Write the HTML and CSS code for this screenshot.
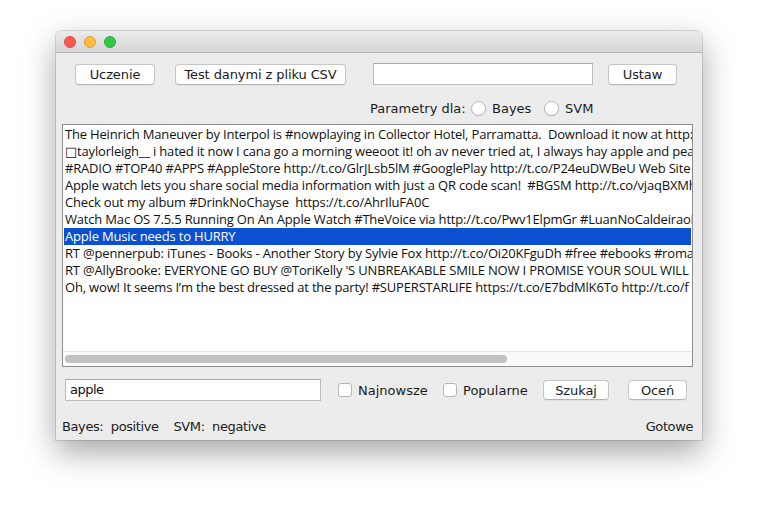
FILE: index.html
```html
<!DOCTYPE html>
<html lang="pl">
<head>
<meta charset="utf-8">
<title>Klasyfikator</title>
<link rel="stylesheet" href="styles.css">
</head>
<body>
<div class="stage">
  <div class="window">
    <div class="titlebar">
      <span class="light red"></span>
      <span class="light yellow"></span>
      <span class="light green"></span>
    </div>
    <div class="content">
      <div class="row-top">
        <button class="btn btn-learn">Uczenie</button>
        <button class="btn btn-test">Test danymi z pliku CSV</button>
        <div class="field field-param"></div>
        <button class="btn btn-set">Ustaw</button>
      </div>
      <div class="row-params">
        <span class="params-label">Parametry dla:</span>
        <span class="radio"></span>
        <span class="radio-label radio-label-bayes">Bayes</span>
        <span class="radio"></span>
        <span class="radio-label">SVM</span>
      </div>
      <div class="list">
        <div class="viewport">
          <div class="rows">
            <div class="item">The Heinrich Maneuver by Interpol is #nowplaying in Collector Hotel, Parramatta.  Download it now at http://</div>
            <div class="item">□taylorleigh__ i hated it now I cana go a morning weeoot it! oh av never tried at, I always hay apple and pear</div>
            <div class="item">#RADIO #TOP40 #APPS #AppleStore http://t.co/GlrJLsb5lM #GooglePlay http://t.co/P24euDWBeU Web Site h</div>
            <div class="item">Apple watch lets you share social media information with just a QR code scan!  #BGSM http://t.co/vjaqBXMh</div>
            <div class="item">Check out my album #DrinkNoChayse  https://t.co/AhrIluFA0C</div>
            <div class="item">Watch Mac OS 7.5.5 Running On An Apple Watch #TheVoice via http://t.co/Pwv1ElpmGr #LuanNoCaldeiraoD</div>
            <div class="item selected">Apple Music needs to HURRY</div>
            <div class="item">RT @pennerpub: iTunes - Books - Another Story by Sylvie Fox http://t.co/Oi20KFguDh #free #ebooks #roma</div>
            <div class="item">RT @AllyBrooke: EVERYONE GO BUY @ToriKelly 'S UNBREAKABLE SMILE NOW I PROMISE YOUR SOUL WILL BE S</div>
            <div class="item">Oh, wow! It seems I’m the best dressed at the party! #SUPERSTARLIFE https://t.co/E7bdMlK6To http://t.co/f</div>
          </div>
        </div>
        <div class="hscroll"><div class="thumb"></div></div>
      </div>
      <div class="row-search">
        <div class="field field-search">apple</div>
        <span class="check"></span>
        <span class="check-label check-label-new">Najnowsze</span>
        <span class="check"></span>
        <span class="check-label check-label-pop">Popularne</span>
        <button class="btn btn-search">Szukaj</button>
        <button class="btn btn-rate">Oceń</button>
      </div>
      <div class="row-status">
        <span class="status-left">Bayes:&nbsp; positive &nbsp;&nbsp; SVM:&nbsp; negative</span>
        <span class="status-right">Gotowe</span>
      </div>
    </div>
  </div>
</div>
</body>
</html>
```
FILE: styles.css
```css
* { box-sizing: border-box; }
html, body {
  margin: 0;
  padding: 0;
  background: #ffffff;
}
body {
  width: 758px;
  height: 520px;
  overflow: hidden;
  font-family: "DejaVu Sans", "Liberation Sans", sans-serif;
  font-size: 13px;
  color: #1c1c1c;
}
.stage {
  padding: 31px 0 0 56px;
}
.window {
  width: 646px;
  height: 409px;
  background: #ececec;
  border-radius: 5px 5px 0 0;
  box-shadow: 0 0 0 1px rgba(0,0,0,0.12), 0 12px 32px rgba(0,0,0,0.36);
  display: flex;
  flex-direction: column;
}
.titlebar {
  height: 22px;
  flex: none;
  border-radius: 5px 5px 0 0;
  background: linear-gradient(#ebebeb, #d6d6d6);
  border-bottom: 1px solid #b4b4b4;
  display: flex;
  align-items: center;
  padding-left: 8px;
  gap: 8px;
}
.light {
  width: 12px;
  height: 12px;
  border-radius: 50%;
}
.red { background: #fc5753; border: 1px solid #df4744; }
.yellow { background: #fdbc40; border: 1px solid #de9f34; }
.green { background: #33c748; border: 1px solid #27aa35; }

.content {
  flex: 1;
  display: flex;
  flex-direction: column;
}
.btn {
  font-family: inherit;
  font-size: 13px;
  letter-spacing: -0.1px;
  color: #1c1c1c;
  height: 21px;
  padding: 0;
  background: #ffffff;
  border: 1px solid #c6c6c6;
  border-bottom-color: #b3b3b3;
  border-radius: 4px;
  box-shadow: 0 1px 0 rgba(0,0,0,0.04);
}
.field {
  background: #ffffff;
  border: 1px solid #bdbdbd;
  border-top-color: #a9a9a9;
  height: 22px;
}
.row-top {
  display: flex;
  align-items: center;
  height: 22px;
  margin-top: 10px;
  padding-left: 19px;
}
.btn-learn { width: 80px; }
.btn-test { width: 171px; margin-left: 20px; }
.field-param { width: 220px; margin-left: 27px; }
.btn-set { width: 69px; margin-left: 15px; }

.row-params {
  display: flex;
  align-items: center;
  height: 16px;
  margin-top: 15px;
  padding-left: 314px;
}
.params-label { width: 101px; }
.radio {
  width: 15px;
  height: 15px;
  border-radius: 50%;
  background: #ffffff;
  border: 1px solid #b5b5b5;
  box-shadow: 0 1px 0 rgba(0,0,0,0.05);
}
.radio-label { margin-left: 6px; }
.radio-label-bayes { width: 52px; }

.list {
  margin: 8px 0 0 6px;
  width: 631px;
  height: 243px;
  background: #ffffff;
  border: 1px solid #8e8e8e;
  display: flex;
  flex-direction: column;
}
.viewport {
  flex: 1;
  overflow: hidden;
  padding: 1px 0 0 2px;
}
.item {
  height: 17px;
  line-height: 17px;
  white-space: pre;
  font-family: "Open Sans", "DejaVu Sans", sans-serif;
  font-size: 13px;
  letter-spacing: -0.18px;
  width: 900px;
  color: #111111;
}
.item.selected {
  background: #0b51cf;
  color: #ffffff;
  width: 627px;
  margin-left: -1px;
  padding-left: 1px;
}
.hscroll {
  height: 15px;
  flex: none;
  background: #fafafa;
  border-top: 1px solid #e5e5e5;
  padding: 3px 0 0 2px;
}
.thumb {
  width: 442px;
  height: 8px;
  border-radius: 4px;
  background: #c2c2c2;
}

.row-search {
  display: flex;
  align-items: center;
  height: 22px;
  margin-top: 12px;
  padding-left: 9px;
}
.field-search {
  width: 256px;
  padding-left: 4px;
  line-height: 20px;
  letter-spacing: -0.5px;
  color: #111111;
}
.check {
  width: 14px;
  height: 14px;
  border-radius: 3px;
  background: #ffffff;
  border: 1px solid #b5b5b5;
  margin-left: 17px;
}
.check-label { margin-left: 6px; }
.check-label-new { width: 68px; }
.check-label-pop { width: 80px; }
.btn-search { width: 66px; height: 20px; }
.btn-rate { width: 59px; height: 20px; margin-left: 19px; }

.row-status {
  display: flex;
  justify-content: space-between;
  margin-top: 18px;
  padding: 0 9px 0 6px;
  line-height: 16px;
  letter-spacing: -0.4px;
}
```
